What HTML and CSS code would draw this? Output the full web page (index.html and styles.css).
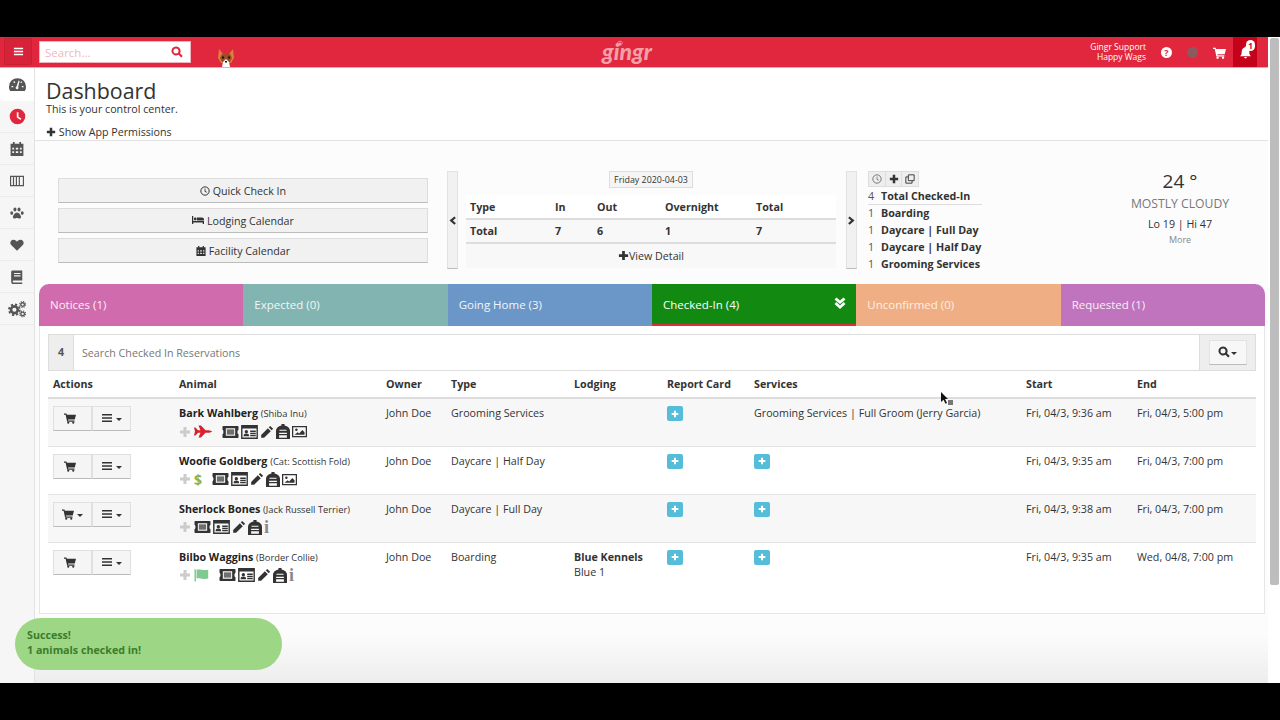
FILE: index.html
```html
<!DOCTYPE html>
<html lang="en">
  <head>
    <meta charset="UTF-8" />
    <title>Dashboard</title>
    <link rel="stylesheet" href="styles.css">
  </head>
  <body>
    <svg class="sprite" xmlns="http://www.w3.org/2000/svg">
      <symbol id="i-bars" viewBox="0 0 24 24"><path d="M2 4h20v3H2zM2 10.500h20v3H2zM2 17h20v3H2z"/></symbol>
      <symbol id="i-search" viewBox="0 0 24 24"><path fill-rule="evenodd" d="M10 1a9 9 0 1 0 5 16.500l5.500 5.500 3-3-5.500-5.500A9 9 0 0 0 10 1zm0 4a5 5 0 1 1 0 10 5 5 0 0 1 0-10z"/></symbol>
      <symbol id="i-cart" viewBox="0 0 24 24"><path d="M0 3h5l.6 2.500H24l-2.500 9.500H8l.4 2H21v2.500H6.300L3.200 5.500H0z"/><circle cx="8.500" cy="21.500" r="2.200"/><circle cx="18.500" cy="21.500" r="2.200"/></symbol>
      <symbol id="i-bell" viewBox="0 0 24 24"><path d="M12 1a1.800 1.800 0 0 1 1.800 2A7 7 0 0 1 19 10c0 6 1.500 7 3 9H2c1.500-2 3-3 3-9a7 7 0 0 1 5.200-7A1.800 1.800 0 0 1 12 1zM9.500 20.500h5a2.500 2.500 0 0 1-5 0z"/></symbol>
      <symbol id="i-gauge" viewBox="0 0 24 24"><path d="M12 3A12 12 0 0 0 0 15c0 2.500.7 4.500 1.800 6h20.400c1.100-1.500 1.800-3.500 1.800-6A12 12 0 0 0 12 3z"/><path fill="#f8f8f8" d="M13.500 6.500l1.500.5-2 8.500a2 2 0 1 1-2.400-.6zM3.500 14h2.500v2H3.500zM18 14h2.500v2H18zM6 8.500l1.400-1.300 1.600 1.700L7.600 10.200zM16 9l1.500-1.700 1.300 1.300-1.600 1.600z"/></symbol>
      <symbol id="i-clock" viewBox="0 0 24 24"><path fill-rule="evenodd" d="M12 1a11 11 0 1 0 0 22 11 11 0 0 0 0-22zm-1 5h2.400v6.200l4 2.600-1.200 2L11 13.500z"/></symbol>
      <symbol id="i-clock-o" viewBox="0 0 24 24"><circle cx="12" cy="12" r="10" fill="none" stroke="currentColor" stroke-width="2.400"/><path d="M11 6h2v6.200l3.600 2.200-1 1.700L11 13.300z"/></symbol>
      <symbol id="i-calendar" viewBox="0 0 24 24"><path fill-rule="evenodd" d="M5 0h3v3h8V0h3v3h4v21H1V3h4zM4 10v3h3v-3zm6 0v3h4v-3zm7 0v3h3v-3zM4 16v3h3v-3zm6 0v3h4v-3zm7 0v3h3v-3z"/></symbol>
      <symbol id="i-barcode" viewBox="0 0 24 24"><path fill-rule="evenodd" d="M0 3h24v18H0zm2 2v14h3V5zm5 0v14h3V5zm5 0v14h3V5zm5 0v14h5V5z"/></symbol>
      <symbol id="i-paw" viewBox="0 0 24 24"><ellipse cx="8.500" cy="6" rx="2.600" ry="3.500"/><ellipse cx="15.500" cy="6" rx="2.600" ry="3.500"/><ellipse cx="3" cy="12" rx="2.500" ry="3.200"/><ellipse cx="21" cy="12" rx="2.500" ry="3.200"/><path d="M12 11c3.500 0 7 5 7 8 0 2-1.500 2.500-3 2.500s-2.500-1-4-1-2.500 1-4 1-3-.5-3-2.500c0-3 3.500-8 7-8z"/></symbol>
      <symbol id="i-heart" viewBox="0 0 24 24"><path d="M12 22L2 12C-1 8.500 1 3 6 3c3 0 5 2 6 3.500C13 5 15 3 18 3c5 0 7 5.500 4 9z"/></symbol>
      <symbol id="i-book" viewBox="0 0 24 24"><path fill-rule="evenodd" d="M4 1h17v17H6a1.800 1.800 0 0 0 0 3.500h15V24H5.500C3 24 2 22 2 19.500V4c0-2 1-3 2-3zm3 4v2h11V5zm0 4v2h11V9z"/></symbol>
      <symbol id="i-cogs" viewBox="0 0 24 24"><circle cx="8.500" cy="13" r="4.500" fill="none" stroke="currentColor" stroke-width="3.500"/><circle cx="8.500" cy="13" r="7.200" fill="none" stroke="currentColor" stroke-width="2.400" stroke-dasharray="3 2.650"/><circle cx="19.500" cy="6" r="2.400" fill="none" stroke="currentColor" stroke-width="1.800"/><circle cx="19.500" cy="6" r="3.900" fill="none" stroke="currentColor" stroke-width="1.400" stroke-dasharray="1.700 1.360"/><circle cx="19.500" cy="18.500" r="2.400" fill="none" stroke="currentColor" stroke-width="1.800"/><circle cx="19.500" cy="18.500" r="3.900" fill="none" stroke="currentColor" stroke-width="1.400" stroke-dasharray="1.700 1.360"/></symbol>
      <symbol id="i-plus" viewBox="0 0 24 24"><path d="M9 2h6v7h7v6h-7v7H9v-7H2V9h7z"/></symbol>
      <symbol id="i-bed" viewBox="0 0 24 24"><path d="M0 4h2.500v10H24v6h-2.500v-3h-19v3H0z"/><circle cx="6.500" cy="10" r="2.800"/><path d="M10 7h10a4 4 0 0 1 4 4v2H10z"/></symbol>
      <symbol id="i-left" viewBox="0 0 24 24"><path d="M17 1l4 4-8 7 8 7-4 4L4 12z"/></symbol>
      <symbol id="i-right" viewBox="0 0 24 24"><path d="M7 1L3 5l8 7-8 7 4 4 13-11z"/></symbol>
      <symbol id="i-clone" viewBox="0 0 24 24"><path fill="none" stroke="currentColor" stroke-width="2.200" d="M8 2h14v14H8zM8 7H2v15h15v-6"/></symbol>
      <symbol id="i-dbl-down" viewBox="0 0 24 24"><path d="M5 1L1 5l11 9 11-9-4-4-7 6zM5 10l-4 4 11 10 11-10-4-4-7 7z"/></symbol>
      <symbol id="i-ticket" viewBox="0 0 24 18"><path fill-rule="evenodd" d="M1 0h22a1 1 0 0 1 1 1v4.500c-2 .8-2 6.200 0 7V17a1 1 0 0 1-1 1H1a1 1 0 0 1-1-1v-4.500c2-.8 2-6.200 0-7V1a1 1 0 0 1 1-1zm4 3.500v11h14v-11z"/><path d="M6.500 5h11v8h-11z" opacity=".7"/></symbol>
      <symbol id="i-card" viewBox="0 0 24 20"><path fill-rule="evenodd" d="M0 0h24v20H0zm2 5v13h20V5z"/><circle cx="7.500" cy="9.500" r="2.400"/><path d="M3.500 16c0-2.800 1.500-3.800 4-3.800s4 1 4 3.800zM13 8h8v2h-8zM13 11h8v2h-8zM13 14h8v2h-8z"/></symbol>
      <symbol id="i-pencil" viewBox="0 0 24 24"><path d="M17.500 1.500l5 5-2.500 2.500-5-5zM13.500 5.500l5 5L7 22H2v-5z"/></symbol>
      <symbol id="i-pack" viewBox="3 1 18 22" preserveAspectRatio="none"><path fill-rule="evenodd" d="M10 1h4v2.200c4.500.8 7 4 7 7.800v12H3V11c0-3.800 2.500-7 7-7.800zM7.500 9.500V11h9V9.500zM7 14v1.500h10V14zM7 17.500V21h10v-3.500z"/></symbol>
      <symbol id="i-image" viewBox="0 0 24 20"><path fill-rule="evenodd" d="M0 1h24v18H0zm2 2v14h20V3z"/><circle cx="7" cy="7" r="2"/><path d="M4 15l5-4 2.500 2 5-5.500L20 11v4z"/></symbol>
      <symbol id="i-plane" viewBox="0 0 36 24"><path d="M0 4h3l5 5.500h5L9 0h5l9 9.500h6c3 0 6 1.500 7 2.500-1 1-4 2.500-7 2.500h-6L14 24H9l4-9.500H8L3 20H0l2-8z"/></symbol>
      <symbol id="i-flag" viewBox="0 0 24 24"><path d="M0 2h2.500v21H0z"/><path d="M3.500 3c5-2 11 2 20 0v15c-8 2.500-15-2-20 0z"/></symbol>
    </svg>

    <div class="letterbox-top"></div>

    <div class="app">
      <div class="app-main">
        <header class="topbar">
          <button class="menu-btn"><svg class="ic ic-11"><use href="#i-bars"/></svg></button>
          <div class="search-box">
            <span class="search-hint">Search...</span>
            <svg class="ic ic-12 red"><use href="#i-search"/></svg>
          </div>
          <svg class="dog" viewBox="0 0 16 18">
            <path fill="#d9803a" d="M1 0l4 5h6l4-5 1 9-3 5H3L0 9z"/>
            <path fill="#9a4d26" d="M4 5h8l2 4-2 4H4L2 9z"/>
            <path fill="#fff" d="M5 13l3-3 3 3 1 5H4z"/>
            <path fill="#1d1512" d="M4 7.500h2v2H4zM10 7.500h2v2h-2zM7 12h2v1.600H7z"/>
          </svg>
          <div class="logo">
            <svg class="logo-paw" viewBox="0 0 24 24"><use href="#i-paw"/></svg>
            gingr
          </div>
          <div class="user-info">Gingr Support<br>Happy Wags</div>
          <span class="help-ic">?</span>
          <span class="status-dot"></span>
          <svg class="ic ic-13 cart-top"><use href="#i-cart"/></svg>
          <div class="bell-btn">
            <svg class="ic ic-13"><use href="#i-bell"/></svg>
            <span class="bell-count">1</span>
          </div>
        </header>

        <div class="body-row">
          <nav class="sidebar">
            <a class="side-item first"><svg class="ic ic-16"><use href="#i-gauge"/></svg></a>
            <a class="side-item"><svg class="ic ic-16 red"><use href="#i-clock"/></svg></a>
            <a class="side-item"><svg class="ic ic-14"><use href="#i-calendar"/></svg></a>
            <a class="side-item"><svg class="ic ic-14"><use href="#i-barcode"/></svg></a>
            <a class="side-item"><svg class="ic ic-14"><use href="#i-paw"/></svg></a>
            <a class="side-item"><svg class="ic ic-14"><use href="#i-heart"/></svg></a>
            <a class="side-item"><svg class="ic ic-14"><use href="#i-book"/></svg></a>
            <a class="side-item"><svg class="ic ic-18"><use href="#i-cogs"/></svg></a>
          </nav>

          <main class="content">
            <section class="page-head">
              <h1>Dashboard</h1>
              <p>This is your control center.</p>
              <div class="perm-link"><svg class="ic ic-10"><use href="#i-plus"/></svg> Show App Permissions</div>
            </section>

            <section class="summary">
              <div class="quick-btns">
                <button class="btn-wide"><svg class="ic ic-10"><use href="#i-clock-o"/></svg> Quick Check In</button>
                <button class="btn-wide"><svg class="ic ic-12"><use href="#i-bed"/></svg> Lodging Calendar</button>
                <button class="btn-wide"><svg class="ic ic-10"><use href="#i-calendar"/></svg> Facility Calendar</button>
              </div>

              <button class="pager"><svg class="ic ic-11"><use href="#i-left"/></svg></button>

              <div class="day-summary">
                <div class="date-row"><span class="date-chip">Friday 2020-04-03</span></div>
                <table class="day-table">
                  <colgroup><col class="c-type"><col class="c-in"><col class="c-out"><col class="c-night"><col></colgroup>
                  <thead>
                    <tr><th>Type</th><th>In</th><th>Out</th><th>Overnight</th><th>Total</th></tr>
                  </thead>
                  <tbody>
                    <tr><td>Total</td><td>7</td><td>6</td><td>1</td><td>7</td></tr>
                  </tbody>
                </table>
                <div class="view-detail"><svg class="ic ic-11"><use href="#i-plus"/></svg>View Detail</div>
              </div>

              <button class="pager"><svg class="ic ic-11"><use href="#i-right"/></svg></button>

              <div class="counts">
                <div class="count-tools">
                  <span><svg class="ic ic-10 grey"><use href="#i-clock-o"/></svg></span>
                  <span><svg class="ic ic-10"><use href="#i-plus"/></svg></span>
                  <span><svg class="ic ic-10"><use href="#i-clone"/></svg></span>
                </div>
                <div class="count-row total"><span>4</span><b>Total Checked-In</b></div>
                <div class="count-row"><span>1</span><b>Boarding</b></div>
                <div class="count-row"><span>1</span><b>Daycare | Full Day</b></div>
                <div class="count-row"><span>1</span><b>Daycare | Half Day</b></div>
                <div class="count-row"><span>1</span><b>Grooming Services</b></div>
              </div>

              <div class="weather">
                <div class="temp">24 °</div>
                <div class="sky">MOSTLY CLOUDY</div>
                <div class="lohi">Lo 19 | Hi 47</div>
                <div class="more">More</div>
              </div>
            </section>

            <div class="tabs">
              <div class="tab notices">Notices (1)</div>
              <div class="tab expected">Expected (0)</div>
              <div class="tab going">Going Home (3)</div>
              <div class="tab checked">Checked-In (4)<svg class="ic ic-12"><use href="#i-dbl-down"/></svg></div>
              <div class="tab unconfirmed">Unconfirmed (0)</div>
              <div class="tab requested">Requested (1)</div>
            </div>

            <section class="panel">
              <div class="search-row">
                <span class="search-count">4</span>
                <span class="search-input">Search Checked In Reservations</span>
                <span class="search-addon"><button class="btn-sm"><svg class="ic ic-12"><use href="#i-search"/></svg><i class="caret tight"></i></button></span>
              </div>

              <table class="res-table">
                <colgroup>
                  <col class="w-actions"><col class="w-animal"><col class="w-owner"><col class="w-type"><col class="w-lodging"><col class="w-report"><col class="w-services"><col class="w-start"><col>
                </colgroup>
                <thead>
                  <tr><th>Actions</th><th>Animal</th><th>Owner</th><th>Type</th><th>Lodging</th><th>Report Card</th><th>Services</th><th>Start</th><th>End</th></tr>
                </thead>
                <tbody>
                  <tr class="alt">
                    <td><div class="btn-pair"><button class="cart-only"><svg class="ic ic-12"><use href="#i-cart"/></svg></button><button><svg class="ic ic-12"><use href="#i-bars"/></svg><i class="caret"></i></button></div></td>
                    <td>
                      <div class="pet"><b>Bark Wahlberg</b> <small>(Shiba Inu)</small></div>
                      <div class="pet-icons">
                        <svg class="ic ic-12 faint"><use href="#i-plus"/></svg>
                        <svg class="plane"><use href="#i-plane"/></svg>
                        <svg class="ic ic-ticket push"><use href="#i-ticket"/></svg>
                        <svg class="ic ic-card"><use href="#i-card"/></svg>
                        <svg class="ic ic-14"><use href="#i-pencil"/></svg>
                        <svg class="ic ic-pack"><use href="#i-pack"/></svg>
                        <svg class="ic ic-image"><use href="#i-image"/></svg>
                      </div>
                    </td>
                    <td>John Doe</td><td>Grooming Services</td><td></td>
                    <td><span class="add-box"><svg class="ic ic-8"><use href="#i-plus"/></svg></span></td>
                    <td>Grooming Services | Full Groom (Jerry Garcia)</td>
                    <td>Fri, 04/3, 9:36 am</td><td>Fri, 04/3, 5:00 pm</td>
                  </tr>
                  <tr>
                    <td><div class="btn-pair"><button class="cart-only"><svg class="ic ic-12"><use href="#i-cart"/></svg></button><button><svg class="ic ic-12"><use href="#i-bars"/></svg><i class="caret"></i></button></div></td>
                    <td>
                      <div class="pet"><b>Woofie Goldberg</b> <small>(Cat: Scottish Fold)</small></div>
                      <div class="pet-icons">
                        <svg class="ic ic-12 faint"><use href="#i-plus"/></svg>
                        <span class="dollar">$</span>
                        <svg class="ic ic-ticket push"><use href="#i-ticket"/></svg>
                        <svg class="ic ic-card"><use href="#i-card"/></svg>
                        <svg class="ic ic-14"><use href="#i-pencil"/></svg>
                        <svg class="ic ic-pack"><use href="#i-pack"/></svg>
                        <svg class="ic ic-image"><use href="#i-image"/></svg>
                      </div>
                    </td>
                    <td>John Doe</td><td>Daycare | Half Day</td><td></td>
                    <td><span class="add-box"><svg class="ic ic-8"><use href="#i-plus"/></svg></span></td>
                    <td><span class="add-box"><svg class="ic ic-8"><use href="#i-plus"/></svg></span></td>
                    <td>Fri, 04/3, 9:35 am</td><td>Fri, 04/3, 7:00 pm</td>
                  </tr>
                  <tr class="alt">
                    <td><div class="btn-pair"><button><svg class="ic ic-12"><use href="#i-cart"/></svg><i class="caret"></i></button><button><svg class="ic ic-12"><use href="#i-bars"/></svg><i class="caret"></i></button></div></td>
                    <td>
                      <div class="pet"><b>Sherlock Bones</b> <small>(Jack Russell Terrier)</small></div>
                      <div class="pet-icons">
                        <svg class="ic ic-12 faint"><use href="#i-plus"/></svg>
                        <svg class="ic ic-ticket first-after"><use href="#i-ticket"/></svg>
                        <svg class="ic ic-card"><use href="#i-card"/></svg>
                        <svg class="ic ic-14"><use href="#i-pencil"/></svg>
                        <svg class="ic ic-pack"><use href="#i-pack"/></svg>
                        <span class="info">i</span>
                      </div>
                    </td>
                    <td>John Doe</td><td>Daycare | Full Day</td><td></td>
                    <td><span class="add-box"><svg class="ic ic-8"><use href="#i-plus"/></svg></span></td>
                    <td><span class="add-box"><svg class="ic ic-8"><use href="#i-plus"/></svg></span></td>
                    <td>Fri, 04/3, 9:38 am</td><td>Fri, 04/3, 7:00 pm</td>
                  </tr>
                  <tr>
                    <td><div class="btn-pair"><button class="cart-only"><svg class="ic ic-12"><use href="#i-cart"/></svg></button><button><svg class="ic ic-12"><use href="#i-bars"/></svg><i class="caret"></i></button></div></td>
                    <td>
                      <div class="pet"><b>Bilbo Waggins</b> <small>(Border Collie)</small></div>
                      <div class="pet-icons">
                        <svg class="ic ic-12 faint"><use href="#i-plus"/></svg>
                        <svg class="ic flag"><use href="#i-flag"/></svg>
                        <svg class="ic ic-ticket push"><use href="#i-ticket"/></svg>
                        <svg class="ic ic-card"><use href="#i-card"/></svg>
                        <svg class="ic ic-14"><use href="#i-pencil"/></svg>
                        <svg class="ic ic-pack"><use href="#i-pack"/></svg>
                        <span class="info">i</span>
                      </div>
                    </td>
                    <td>John Doe</td><td>Boarding</td>
                    <td><b>Blue Kennels</b><br>Blue 1</td>
                    <td><span class="add-box"><svg class="ic ic-8"><use href="#i-plus"/></svg></span></td>
                    <td><span class="add-box"><svg class="ic ic-8"><use href="#i-plus"/></svg></span></td>
                    <td>Fri, 04/3, 9:35 am</td><td>Wed, 04/8, 7:00 pm</td>
                  </tr>
                </tbody>
              </table>
            </section>
          </main>
        </div>
      </div>

      <div class="scroll-track"><div class="scroll-thumb"></div></div>
    </div>

    <div class="letterbox-bottom"></div>

    <!-- things floating over the page -->
    <div class="toast">Success!<br>1 animals checked in!</div>
    <svg class="cursor" viewBox="0 0 14 14">
      <path fill="#111" d="M1 0l7 7H5l2 4-1.500.8-2-4L1 10z"/>
      <path fill="#777" d="M8 8h5v5H8z"/>
    </svg>
  </body>
</html>
```

FILE: styles.css
```css
/* General */
html,
body {
  margin: 0;
  height: 720px;
  overflow: hidden;
}
body {
  font-family: "Open Sans", "Noto Sans", sans-serif;
  font-size: 10.700px;
  color: #333;
  background-color: #000;
  display: flex;
  flex-direction: column;
}
.sprite {
  display: none;
}
.ic {
  fill: currentColor;
  color: #333;
  vertical-align: -1px;
}
.ic-8 { width: 8px; height: 8px; }
.ic-9 { width: 9px; height: 9px; }
.ic-10 { width: 10px; height: 10px; }
.ic-11 { width: 11px; height: 11px; }
.ic-12 { width: 12px; height: 12px; }
.ic-13 { width: 13px; height: 13px; }
.ic-14 { width: 14px; height: 14px; }
.ic-16 { width: 17px; height: 17px; }
.ic-18 { width: 18px; height: 18px; }
.ic-ticket { width: 17px; height: 12px; }
.ic-card { width: 17px; height: 14px; }
.ic-pack { width: 14px; height: 15px; }
.ic-image { width: 15px; height: 13px; }
.ic.red { color: #e0273e; }
.ic.grey { color: #777; }
.ic.faint { color: #ccc; }

.letterbox-top {
  height: 37px;
  flex: none;
}
.letterbox-bottom {
  flex: 1;
}
.app {
  height: 646px;
  display: flex;
  background-color: #fff;
  flex: none;
}
.app-main {
  flex: 1;
  min-width: 0;
  display: flex;
  flex-direction: column;
}

/* Top bar */
.topbar {
  height: 30px;
  flex: none;
  background-color: #e0273e;
  color: #fff;
  display: flex;
  align-items: center;
  position: relative;
  box-shadow: 0 1px 0 #f4a5ae;
}
.topbar .ic {
  color: #fff;
}
.menu-btn {
  width: 28px;
  height: 27px;
  margin: 0 0 2px 4px;
  padding: 0;
  background-color: #d7233a;
  border: 1px solid #c81f33;
  border-radius: 2px;
  display: flex;
  align-items: center;
  justify-content: center;
}
.search-box {
  width: 152px;
  height: 22px;
  margin-left: 7px;
  box-sizing: border-box;
  border: 1px solid #f1b3ba;
  background-color: #fff;
  display: flex;
  align-items: center;
  justify-content: space-between;
  padding: 0 7px 0 5px;
  font-size: 11.500px;
}
.search-hint {
  color: #f2b6bd;
}
.topbar .ic.red {
  color: #e0273e;
}
.dog {
  width: 16px;
  height: 18px;
  margin: 12px 0 0 27px;
}
.logo {
  position: absolute;
  left: 602px;
  top: 0;
  font-family: "Lato", sans-serif;
  font-weight: 900;
  font-style: italic;
  font-size: 23px;
  line-height: 28px;
  color: #f2a0aa;
}
.logo-paw {
  position: absolute;
  left: 15px;
  top: 3px;
  width: 6px;
  height: 6px;
  fill: #f2a0aa;
}
.user-info {
  margin-left: auto;
  text-align: right;
  font-size: 8.500px;
  line-height: 10px;
}
.help-ic {
  width: 11px;
  height: 11px;
  margin-left: 15px;
  border-radius: 50%;
  background-color: #fff;
  color: #e0273e;
  font-size: 9px;
  font-weight: 700;
  line-height: 11px;
  text-align: center;
}
.status-dot {
  width: 11px;
  height: 11px;
  margin-left: 15px;
  border-radius: 50%;
  background-color: #8a5a5f;
}
.cart-top {
  margin-left: 15px;
}
.bell-btn {
  width: 24px;
  height: 30px;
  margin: 0 11px 0 7px;
  background-color: #c4021a;
  display: flex;
  align-items: center;
  justify-content: center;
  position: relative;
}
.bell-count {
  position: absolute;
  top: 3px;
  right: 2px;
  width: 9px;
  height: 11px;
  border-radius: 5px;
  background-color: #fff;
  color: #c4021a;
  font-size: 8px;
  font-weight: 700;
  line-height: 11px;
  text-align: center;
}

/* Sidebar */
.body-row {
  flex: 1;
  display: flex;
  min-height: 0;
}
.sidebar {
  width: 34px;
  flex: none;
  background-color: #f6f6f6;
  border-right: 1px solid #e2e2e2;
  padding-top: 1px;
}
.side-item {
  height: 31px;
  border-bottom: 1px solid #ececec;
  display: flex;
  align-items: center;
  justify-content: center;
}
.side-item .ic {
  color: #555;
}
.side-item .ic.red {
  color: #e0273e;
}
.side-item.first {
  background-color: #fff;
  border-bottom: none;
  height: 33px;
}

/* Page head */
.content {
  flex: 1;
  min-width: 0;
  background: linear-gradient(to bottom, #fcfcfc 92%, #ededed 100%);
  padding-top: 1px;
}
.page-head {
  height: 73px;
  box-sizing: border-box;
  padding: 11px 0 0 11px;
  background-color: #fff;
  border-bottom: 1px solid #e2e2e2;
}
.page-head h1 {
  margin: 0;
  font-size: 21.400px;
  font-weight: 400;
  line-height: 24px;
  color: #333;
}
.page-head p {
  margin: 0;
  line-height: 13px;
}
.perm-link {
  margin-top: 9px;
  line-height: 14px;
}

/* Summary strip */
.summary {
  height: 143px;
  display: flex;
  align-items: flex-start;
}
.quick-btns {
  width: 370px;
  margin: 37px 19px 0 23px;
  display: flex;
  flex-direction: column;
  gap: 5px;
}
.btn-wide {
  height: 25px;
  padding: 0;
  background-color: #f1f1f1;
  border: 1px solid #ddd;
  border-bottom: 1px solid #bbb;
  font-family: inherit;
  font-size: 10.700px;
  color: #333;
}
.pager {
  width: 11px;
  height: 98px;
  margin-top: 30px;
  padding: 0;
  background-color: #f1f1f1;
  border: 1px solid #e2e2e2;
  border-bottom: 1px solid #bbb;
  flex: none;
  display: flex;
  align-items: center;
  justify-content: center;
}
.day-summary {
  width: 370px;
  margin: 30px 10px 0 8px;
}
.date-row {
  height: 24px;
  text-align: center;
}
.date-chip {
  display: inline-block;
  height: 17px;
  line-height: 15px;
  box-sizing: border-box;
  padding: 0 4px;
  background-color: #f5f5f5;
  border: 1px solid #ddd;
  font-size: 8.900px;
}
.day-table {
  width: 100%;
  border-collapse: collapse;
  table-layout: fixed;
  background-color: #fff;
}
.c-type { width: 85px; }
.c-in { width: 42px; }
.c-out { width: 68px; }
.c-night { width: 91px; }
.day-table th,
.day-table td {
  text-align: left;
  padding: 0 0 0 4px;
  font-weight: 700;
}
.day-table th {
  height: 23px;
  border-bottom: 2px solid #ddd;
}
.day-table td {
  height: 22px;
  background-color: #f8f8f8;
  border-bottom: 2px solid #ddd;
}
.view-detail {
  height: 24px;
  line-height: 24px;
  text-align: center;
  background-color: #f8f8f8;
}
.counts {
  width: 114px;
  margin: 30px 0 0 11px;
  flex: none;
}
.count-tools {
  display: flex;
  height: 16px;
  width: 51px;
  margin-bottom: 1px;
  background-color: #eee;
  border: 1px solid #ddd;
  box-sizing: border-box;
}
.count-tools span {
  flex: 1;
  display: flex;
  align-items: center;
  justify-content: center;
  border-right: 1px solid #ddd;
}
.count-tools span:last-child {
  border-right: none;
}
.count-row {
  display: flex;
  height: 17px;
  box-sizing: border-box;
  line-height: 17px;
  white-space: nowrap;
}
.count-row span {
  width: 13px;
  color: #555;
}
.count-row.total {
  border-bottom: 1px solid #ddd;
}
.weather {
  width: 130px;
  flex: none;
  margin: 28px 0 0 133px;
  text-align: center;
}
.temp {
  font-size: 19px;
  line-height: 24px;
}
.sky {
  font-size: 12.200px;
  line-height: 21px;
  white-space: nowrap;
  color: #777;
}
.lohi {
  line-height: 21px;
  white-space: nowrap;
}
.more {
  font-size: 9px;
  line-height: 10px;
  color: #888;
}

/* Tabs */
.tabs {
  display: flex;
  margin: 0 3px 0 4px;
  height: 42px;
  border-radius: 10px 10px 0 0;
  overflow: hidden;
}
.tab {
  flex: 1;
  color: #fff;
  font-size: 11.500px;
  line-height: 42px;
  padding-left: 11px;
  position: relative;
}
.tab.notices { background-color: #d06bae; color: #fdeef7; }
.tab.expected { background-color: #82b5b1; color: #eef8f6; }
.tab.going { background-color: #6b97c8; color: #f0f6fc; }
.tab.checked {
  background-color: #128a12;
  border-bottom: 2px solid #d6323c;
  box-sizing: border-box;
}
.tab.checked .ic {
  position: absolute;
  right: 10px;
  top: 13px;
  color: #fff;
}
.tab.unconfirmed { background-color: #efae84; color: #fdf0e5; }
.tab.requested { background-color: #c074bd; color: #f9eef8; }

/* Reservations */
.panel {
  margin: 0 3px 0 4px;
  height: 288px;
  box-sizing: border-box;
  padding: 8px 8px 0;
  background-color: #fff;
  border: 1px solid #e6e6e6;
  border-top: none;
  overflow: hidden;
}
.search-row {
  display: flex;
  height: 37px;
  box-sizing: border-box;
  border: 1px solid #ddd;
}
.search-count {
  width: 24px;
  background-color: #eee;
  border-right: 1px solid #ddd;
  font-weight: 700;
  line-height: 35px;
  text-align: center;
  color: #555;
}
.search-input {
  flex: 1;
  padding-left: 8px;
  line-height: 36px;
  color: #777;
}
.search-addon {
  width: 55px;
  background-color: #eee;
  border-left: 1px solid #ddd;
  display: flex;
  align-items: center;
  justify-content: center;
}
.btn-sm {
  width: 38px;
  height: 25px;
  padding: 0;
  background-color: #f7f7f7;
  border: 1px solid #e2e2e2;
  border-bottom: 1px solid #bbb;
}
.caret {
  display: inline-block;
  margin-left: 3px;
  vertical-align: 2px;
  border-top: 3px solid #333;
  border-left: 3px solid transparent;
  border-right: 3px solid transparent;
}
.caret.tight {
  margin-left: 1px;
}
.res-table {
  width: 1208px;
  border-collapse: collapse;
  table-layout: fixed;
}
.w-actions { width: 126px; }
.w-animal { width: 207px; }
.w-owner { width: 65px; }
.w-type { width: 123px; }
.w-lodging { width: 93px; }
.w-report { width: 87px; }
.w-services { width: 272px; }
.w-start { width: 111px; }
.res-table th {
  height: 27px;
  padding: 0 0 0 5px;
  text-align: left;
  font-weight: 700;
  border-bottom: 2px solid #ddd;
  box-sizing: border-box;
}
.res-table td {
  height: 48px;
  box-sizing: border-box;
  padding: 7px 0 0 5px;
  vertical-align: top;
  line-height: 15px;
  border-bottom: 1px solid #e4e4e4;
  white-space: nowrap;
}
.res-table tbody tr:last-child td {
  border-bottom: none;
}
.res-table tr.alt td {
  background-color: #f7f7f7;
}
.btn-pair {
  display: flex;
  width: 78px;
}
.btn-pair button {
  height: 25px;
  width: 39px;
  padding: 0;
  background-color: #f5f5f5;
  border: 1px solid #e0e0e0;
  border-bottom: 1px solid #bbb;
}
.btn-pair button.cart-only {
  padding-right: 6px;
}
.pet b {
  color: #222;
}
.pet small {
  font-size: 9.300px;
}
.pet-icons {
  display: flex;
  align-items: center;
  gap: 2px;
  margin-top: 3px;
  height: 15px;
}
.pet-icons .push {
  margin-left: 8px;
}
.pet-icons .first-after {
  margin-left: 1px;
}
.plane {
  width: 18px;
  height: 13px;
  margin-left: 1px;
  fill: #d8202f;
}
.dollar {
  width: 8px;
  margin-left: 1px;
  color: #8fb339;
  font-size: 14px;
  font-weight: 700;
  line-height: 15px;
}
.info {
  color: #888;
  font-family: "Liberation Serif", serif;
  font-size: 18px;
  font-weight: 700;
  line-height: 15px;
  width: 8px;
}
.ic.flag {
  color: #7fca92;
  width: 15px;
  height: 14px;
  margin-left: 1px;
}
.add-box {
  display: inline-flex;
  width: 16px;
  height: 15px;
  align-items: center;
  justify-content: center;
  background-color: #55bcd9;
  border-radius: 2px;
}
.add-box .ic {
  color: #fff;
}

/* Scrollbar */
.scroll-track {
  width: 12px;
  flex: none;
  background-color: #fff;
  padding: 1px 1px 0 2px;
  box-sizing: border-box;
}
.scroll-thumb {
  height: 547px;
  background-color: #bdbdbd;
  border-radius: 2px;
}

/* Floating bits */
.toast {
  position: absolute;
  left: 15px;
  top: 618px;
  width: 267px;
  height: 52px;
  box-sizing: border-box;
  padding: 10px 12px;
  border-radius: 26px;
  background-color: #9dd685;
  color: #3b7d2b;
  font-weight: 700;
  line-height: 15px;
}
.cursor {
  position: absolute;
  left: 940px;
  top: 392px;
  width: 14px;
  height: 14px;
}
```
